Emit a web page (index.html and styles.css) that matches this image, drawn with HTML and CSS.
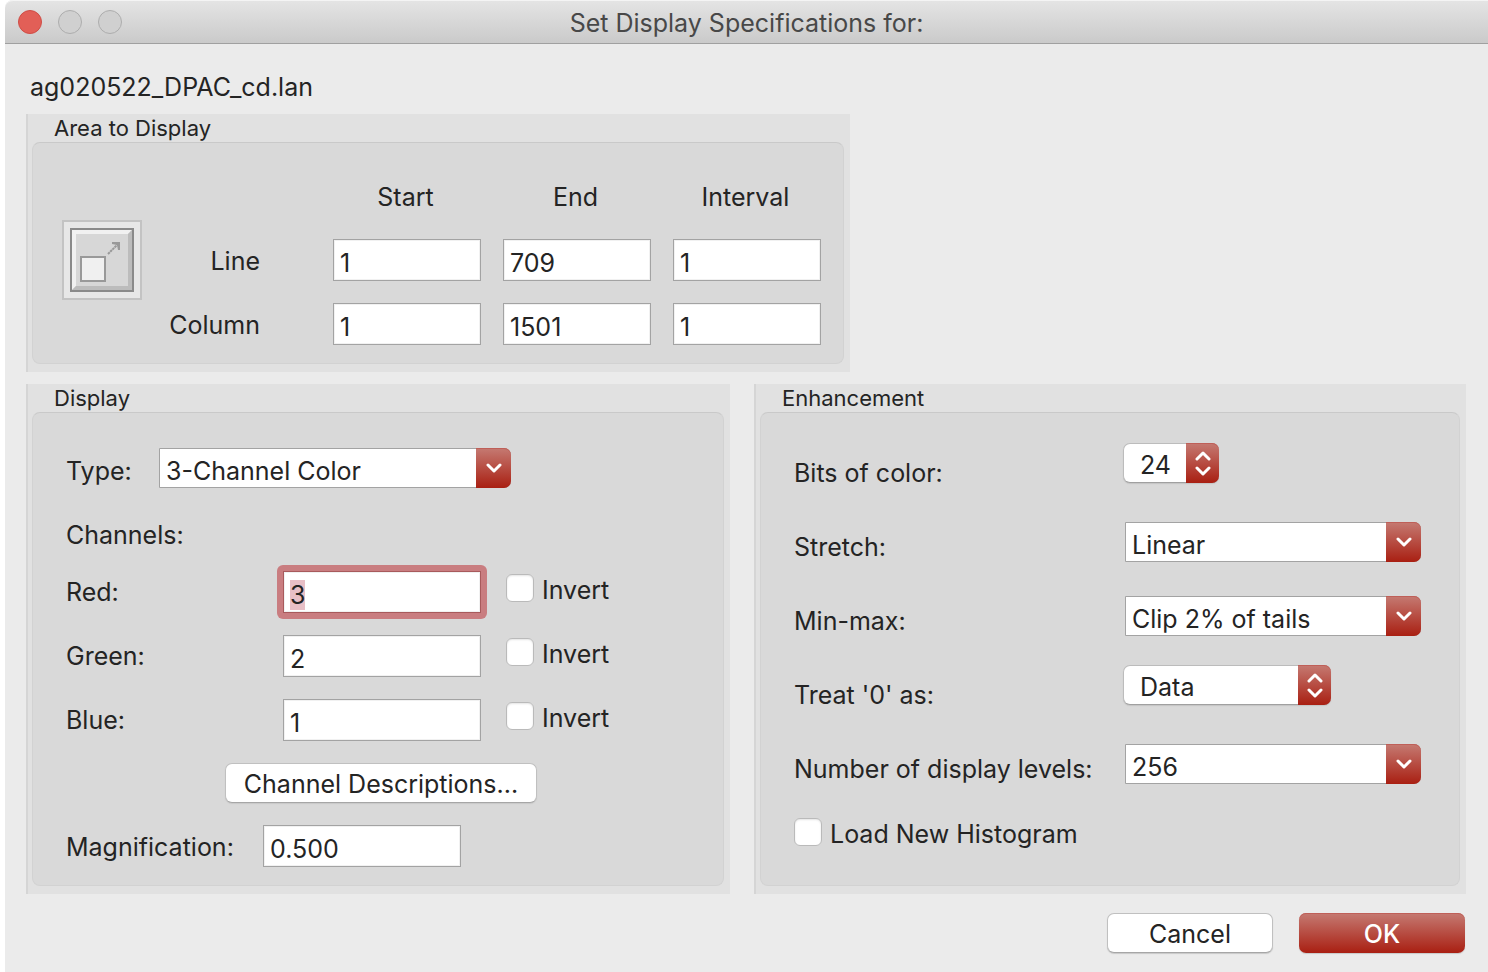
FILE: index.html
```html
<!DOCTYPE html>
<html lang="en">
<head>
<meta charset="utf-8">
<title>Set Display Specifications for:</title>
<link rel="stylesheet" href="styles.css">
</head>
<body>
<main class="window">
  <header class="titlebar">
    <div class="lights">
      <button class="light light-close" type="button" aria-label="Close"></button>
      <button class="light" type="button" aria-label="Minimize" disabled></button>
      <button class="light" type="button" aria-label="Zoom" disabled></button>
    </div>
    <h1 class="title">Set Display Specifications for:</h1>
  </header>

  <form class="content">
    <p class="filename">ag020522_DPAC_cd.lan</p>

    <section class="group group-area" aria-labelledby="area-title">
      <h2 class="group-title" id="area-title">Area to Display</h2>
      <div class="panel area">
        <button class="expand" type="button" aria-label="Select whole area">
          <svg width="80" height="80" viewBox="0 0 80 80" aria-hidden="true">
            <rect x="1" y="1" width="78" height="78" fill="#e7e7e7" stroke="#c3c3c3" stroke-width="2"/>
            <rect x="8" y="8" width="64" height="64" fill="#8a8a8a"/>
            <rect x="10" y="10" width="60" height="60" fill="#d7d7d7"/>
            <path d="M10 10H70L66 14H14V66L10 70Z" fill="#f1f1f1"/>
            <path d="M70 10V70H10L14 66H66V14Z" fill="#bcbcbc"/>
            <rect x="19" y="37" width="24" height="24" fill="#f0f0f0" stroke="#999" stroke-width="2"/>
            <path d="M46 34L56 24" fill="none" stroke="#999" stroke-width="2" stroke-dasharray="2.500 0.600"/>
            <path d="M50 22H58V30H56L55 25L50 24Z" fill="#999"/>
          </svg>
        </button>
        <div class="area-grid">
          <span></span>
          <span class="col-head">Start</span>
          <span class="col-head">End</span>
          <span class="col-head">Interval</span>
          <span class="row-head">Line</span>
          <input class="field" type="text" value="1" aria-label="Line start">
          <input class="field" type="text" value="709" aria-label="Line end">
          <input class="field" type="text" value="1" aria-label="Line interval">
          <span class="row-head">Column</span>
          <input class="field" type="text" value="1" aria-label="Column start">
          <input class="field" type="text" value="1501" aria-label="Column end">
          <input class="field" type="text" value="1" aria-label="Column interval">
        </div>
      </div>
    </section>

    <div class="columns">
      <section class="group" aria-labelledby="display-title">
        <h2 class="group-title" id="display-title">Display</h2>
        <div class="panel display">
          <div class="type-row">
            <label for="type">Type:</label>
            <div class="combo type-combo">
              <select id="type"><option>3-Channel Color</option></select>
              <span class="arrow"><svg width="16" height="10" viewBox="0 0 16 10" aria-hidden="true"><path d="M2 2L8 8L14 2"/></svg></span>
            </div>
          </div>
          <p class="channels-title">Channels:</p>
          <div class="channels">
            <div class="channel">
              <label for="red">Red:</label>
              <span class="ring"><input class="field" id="red" type="text" value="3"></span>
              <label class="check"><input type="checkbox">Invert</label>
            </div>
            <div class="channel">
              <label for="green">Green:</label>
              <span class="ring"><input class="field" id="green" type="text" value="2"></span>
              <label class="check"><input type="checkbox">Invert</label>
            </div>
            <div class="channel">
              <label for="blue">Blue:</label>
              <span class="ring"><input class="field" id="blue" type="text" value="1"></span>
              <label class="check"><input type="checkbox">Invert</label>
            </div>
          </div>
          <button class="button descriptions" type="button">Channel Descriptions...</button>
          <div class="magnification">
            <label for="mag">Magnification:</label>
            <input class="field" id="mag" type="text" value="0.500">
          </div>
        </div>
      </section>

      <section class="group" aria-labelledby="enh-title">
        <h2 class="group-title" id="enh-title">Enhancement</h2>
        <div class="panel enhancement">
          <div class="settings">
            <label for="bits">Bits of color:</label>
            <div class="popup popup-bits">
              <select id="bits"><option>24</option></select>
              <span class="arrow"><svg width="16" height="26" viewBox="0 0 16 26" aria-hidden="true"><path d="M2 9L8 3L14 9M2 18L8 24L14 18"/></svg></span>
            </div>
            <label for="stretch">Stretch:</label>
            <div class="combo">
              <select id="stretch"><option>Linear</option></select>
              <span class="arrow"><svg width="16" height="10" viewBox="0 0 16 10" aria-hidden="true"><path d="M2 2L8 8L14 2"/></svg></span>
            </div>
            <label for="minmax">Min-max:</label>
            <div class="combo">
              <select id="minmax"><option>Clip 2% of tails</option></select>
              <span class="arrow"><svg width="16" height="10" viewBox="0 0 16 10" aria-hidden="true"><path d="M2 2L8 8L14 2"/></svg></span>
            </div>
            <label for="zero">Treat '0' as:</label>
            <div class="popup popup-zero">
              <select id="zero"><option>Data</option></select>
              <span class="arrow"><svg width="16" height="26" viewBox="0 0 16 26" aria-hidden="true"><path d="M2 9L8 3L14 9M2 18L8 24L14 18"/></svg></span>
            </div>
            <label for="levels">Number of display levels:</label>
            <div class="combo">
              <select id="levels"><option>256</option></select>
              <span class="arrow"><svg width="16" height="10" viewBox="0 0 16 10" aria-hidden="true"><path d="M2 2L8 8L14 2"/></svg></span>
            </div>
          </div>
          <label class="check histogram"><input type="checkbox">Load New Histogram</label>
        </div>
      </section>
    </div>

    <footer class="actions">
      <button class="button action" type="button">Cancel</button>
      <button class="button action primary" type="submit">OK</button>
    </footer>
  </form>
</main>
<script src="script.js"></script>
</body>
</html>
```

FILE: styles.css
```css
* {
  box-sizing: border-box;
}

body {
  margin: 0;
  padding-left: 5px;
  background: #fff;
  color: #242424;
  font-family: Inter, "Liberation Sans", sans-serif;
  font-size: 25px;
  line-height: 32px;
}

h1, h2, p {
  margin: 0;
  font-weight: 400;
}

button, input, select {
  margin: 0;
  font: inherit;
  color: inherit;
}

.window {
  min-height: 100vh;
  background: #ebebeb;
  border-top-left-radius: 8px;
}

.titlebar {
  display: grid;
  grid-template-columns: 1fr auto 1fr;
  align-items: center;
  height: 44px;
  padding: 0 13px;
  border-top: 1px solid #f4f4f4;
  border-bottom: 1px solid #a0a0a0;
  border-top-left-radius: 8px;
  background: linear-gradient(#e4e4e4, #cacaca);
}

.lights {
  display: flex;
  gap: 16px;
}

.light {
  width: 24px;
  height: 24px;
  padding: 0;
  border: 1px solid #adadad;
  border-radius: 50%;
  background: #d0d0d0;
}

.light-close {
  border-color: #cf4d46;
  background: #e25f57;
}

.title {
  padding-top: 2px;
  color: #484848;
  font-size: 25px;
}

.content {
  padding: 27px 22px 19px 21px;
}

.filename {
  padding-left: 4px;
  margin-bottom: 11px;
}

.group {
  display: flex;
  flex-direction: column;
  padding: 0 6px 8px 4px;
  border-left: 2px solid #d5d5d5;
  background: #e1e1e1;
}

.group-area {
  width: 824px;
  max-width: 100%;
  margin-bottom: 12px;
}

.group-title {
  padding-left: 22px;
  font-size: 22px;
  line-height: 28px;
}

.panel {
  flex: 1;
  border: 1px solid #d2d2d2;
  border-top-color: #c9c9c9;
  border-radius: 8px;
  background: #d9d9d9;
}

.area {
  display: flex;
  gap: 22px;
  align-items: flex-start;
  padding: 38px 22px 18px 29px;
}

.expand {
  flex: none;
  margin-top: 39px;
  padding: 0;
  border: 0;
  background: none;
}

.expand svg {
  display: block;
}

.area-grid {
  flex: 1;
  display: grid;
  grid-template-columns: 1fr repeat(3, 148px);
  column-gap: 22px;
  row-gap: 22px;
  align-items: center;
}

.col-head {
  margin-bottom: 4px;
  padding-right: 3px;
  text-align: center;
}

.row-head {
  padding: 2px 51px 0 0;
  text-align: right;
}

.field {
  display: block;
  width: 100%;
  min-width: 0;
  height: 42px;
  padding: 6px 6px 0;
  border: 1px solid #a3a3a3;
  border-radius: 0;
  outline: none;
  background: #fff;
  box-shadow: inset 0 0 0 1px #f1f1f1;
  line-height: 34px;
}

.field::selection {
  background: #e8bfc6;
  color: #242424;
}

.columns {
  display: grid;
  grid-template-columns: 704fr 712fr;
  gap: 24px;
}

.display {
  padding: 35px 33px 18px;
}

.type-row {
  display: grid;
  grid-template-columns: 71px 352px;
  gap: 22px;
  align-items: center;
}

.type-row label {
  padding-top: 6px;
}

.channels-title {
  margin: 31px 0 20px;
}

.channels {
  display: grid;
  gap: 22px;
}

.channel {
  display: grid;
  grid-template-columns: 217px 198px auto;
  align-items: center;
}

.ring {
  margin: -6px;
  padding: 6px;
  border-radius: 6px;
}

.ring:focus-within {
  background: #c97d80;
}

.ring .field:focus {
  border-color: #a85a5c;
}

.check {
  display: flex;
  gap: 8px;
  align-items: center;
}

.channel .check {
  margin: 0 0 4px 25px;
}

.check input {
  appearance: none;
  width: 28px;
  height: 28px;
  margin-bottom: 4px;
  border: 1px solid #bababa;
  border-radius: 6px;
  background: #fff;
  box-shadow: inset 0 1px 2px #e4e4e4;
}

.button {
  height: 40px;
  padding: 2px 12px 0;
  border: 1px solid #c0c0c0;
  border-bottom-color: #a6a6a6;
  border-radius: 7px;
  background: #fff;
  box-shadow: 0 1px 1px #c8c8c8;
}

.descriptions {
  display: block;
  width: 312px;
  margin: 22px 0 22px 159px;
}

.magnification {
  display: grid;
  grid-template-columns: 197px 198px;
  align-items: center;
}

.magnification label {
  padding-top: 2px;
}

.combo,
.popup {
  position: relative;
  height: 40px;
}

.combo select,
.popup select {
  appearance: none;
  display: block;
  width: 100%;
  height: 40px;
  outline: none;
  background: #fff;
}

.combo select {
  padding: 6px 40px 0 6px;
  border: 1px solid #a3a3a3;
  border-radius: 0 7px 7px 0;
}

.popup select {
  padding: 4px 34px 0 16px;
  border: 1px solid #bcbcbc;
  border-bottom-color: #a0a0a0;
  border-radius: 7px;
  box-shadow: 0 1px 1px #c4c4c4;
}

.arrow {
  position: absolute;
  top: 0;
  right: 0;
  display: flex;
  align-items: center;
  justify-content: center;
  width: 35px;
  height: 40px;
  border-radius: 0 7px 7px 0;
  background: linear-gradient(#c57a72, #a91f12);
  box-shadow: inset 0 1px #bf5f58;
  pointer-events: none;
}

.popup .arrow {
  width: 33px;
}

.arrow path {
  fill: none;
  stroke: #fff;
  stroke-width: 3;
  stroke-linecap: round;
  stroke-linejoin: round;
}

.enhancement {
  padding: 23px 38px 23px 33px;
}

.settings {
  display: grid;
  grid-template-columns: 331px minmax(0, 1fr);
  grid-auto-rows: 74px;
  align-items: center;
}

.settings .combo {
  margin-bottom: 10px;
}

.settings .popup {
  margin: 0 0 20px -2px;
}

.popup-bits {
  width: 96px;
}

.popup-zero {
  width: 208px;
}

.histogram {
  margin-top: 12px;
}

.actions {
  display: flex;
  justify-content: flex-end;
  gap: 26px;
  margin-top: 19px;
  padding-right: 1px;
}

.action {
  width: 166px;
}

.primary {
  border: 0;
  background: linear-gradient(#c57a72, #a91f12);
  box-shadow: inset 0 1px #bf5f58, 0 1px 1px #c8c8c8;
  color: #fff;
  font-weight: 500;
}
```

FILE: script.js
```js
const red = document.getElementById("red");
red.focus();
red.select();
```
